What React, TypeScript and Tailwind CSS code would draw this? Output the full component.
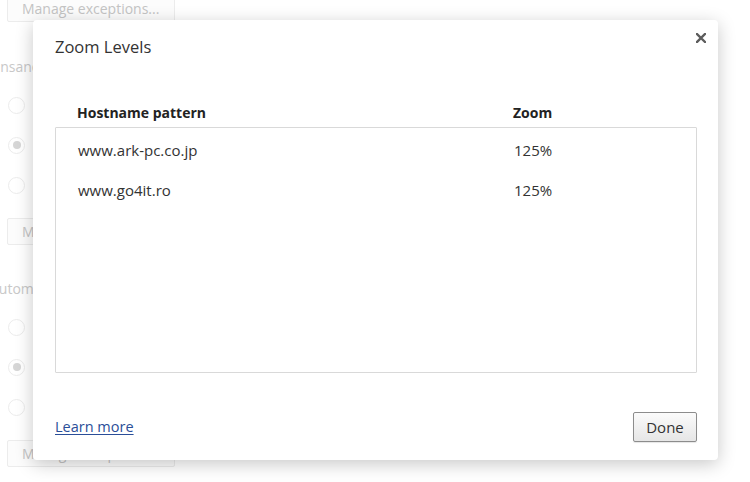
import React from "react";

const Radio = ({ checked = false }: { checked?: boolean }) => (
  <div className="flex h-[40px] items-center pl-[1px]">
    <div className="flex h-[17px] w-[17px] items-center justify-center rounded-full border border-[#ececec] bg-white">
      {checked && <div className="h-[8px] w-[8px] rounded-full bg-[#d6d6d6]" />}
    </div>
  </div>
);

const BgButton = ({ className = "" }: { className?: string }) => (
  <div
    className={`flex h-[27px] w-[168px] items-center rounded-[2px] border border-[#ececec] bg-[#fcfcfc] px-[14px] text-[14px] text-[#c4c4c4] ${className}`}
  >
    Manage exceptions...
  </div>
);

const rows = [
  { host: "www.ark-pc.co.jp", zoom: "125%" },
  { host: "www.go4it.ro", zoom: "125%" },
];

export default function App() {
  return (
    <div
      className="relative h-[482px] w-[750px] overflow-hidden bg-white"
      style={{ fontFamily: '"Open Sans", "Noto Sans", sans-serif' }}
    >
      {/* faded settings page behind the dialog */}
      <div className="flex flex-col pl-[7px]">
        <BgButton className="-mt-[5px]" />
        <div className="-ml-[17px] mt-[35px] h-[20px] text-[14px] leading-[20px] text-[#c8c8c8]">
          Unsandboxed plugin access
        </div>
        <div className="mt-[8px] flex flex-col">
          <Radio />
          <Radio checked />
          <Radio />
        </div>
        <BgButton className="mt-[13px]" />
        <div className="-ml-[17px] mt-[34px] h-[20px] text-[14px] leading-[20px] text-[#c8c8c8]">
          Automatic downloads
        </div>
        <div className="mt-[8px] flex flex-col">
          <Radio />
          <Radio checked />
          <Radio />
        </div>
        <BgButton className="mt-[13px]" />
      </div>

      {/* dialog */}
      <div className="absolute left-[33px] top-[20px] flex h-[440px] w-[685px] flex-col rounded-[4px] bg-white shadow-[0_4px_18px_rgba(0,0,0,0.22)]">
        <button className="absolute right-[12px] top-[13px] flex h-[10px] w-[10px] items-center justify-center">
          <svg viewBox="0 0 10 10" width="10" height="10">
            <path d="M1 1L9 9M9 1L1 9" stroke="#5c5c5c" strokeWidth="2.4" strokeLinecap="square" />
          </svg>
        </button>

        <div className="pl-[22px] pt-[15px] text-[16.5px] leading-[24px] text-[#333]">Zoom Levels</div>

        <div className="ml-[22px] mr-[21px] mt-[44px] grid h-[20px] grid-cols-[436px_1fr] pl-[22px] text-[14px] font-bold leading-[20px] text-[#222]">
          <span>Hostname pattern</span>
          <span>Zoom</span>
        </div>

        <div className="ml-[22px] mr-[21px] mt-[4px] h-[246px] rounded-[1px] border border-[#d9d9d9] pt-[2px]">
          {rows.map((row) => (
            <div
              key={row.host}
              className="grid h-[40px] grid-cols-[436px_1fr] items-center pl-[22px] text-[15px] text-[#333]"
            >
              <span>{row.host}</span>
              <span>{row.zoom}</span>
            </div>
          ))}
        </div>

        <div className="mt-auto flex items-center justify-between pl-[22px] pr-[21px] pb-[18px]">
          <a href="#" className="text-[14.5px] text-[#2a4e98] underline underline-offset-2">
            Learn more
          </a>
          <button className="h-[30px] w-[64px] rounded-[2px] border border-[#8c8c8c] bg-gradient-to-b from-[#fbfbfb] to-[#e6e6e6] text-[15px] text-[#333] shadow-[0_1px_1px_rgba(0,0,0,0.1)]">
            Done
          </button>
        </div>
      </div>
    </div>
  );
}
